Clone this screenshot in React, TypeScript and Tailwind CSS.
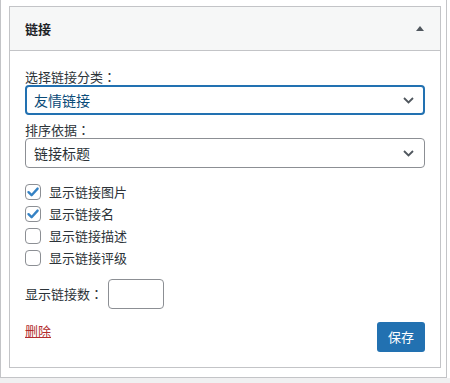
import React from "react";

const font = { fontFamily: '"Noto Sans CJK SC", "Noto Sans", sans-serif' };
const jp = { fontFamily: '"Noto Sans CJK JP", "Noto Sans CJK SC", sans-serif' };

function Colon() {
  return <span style={jp}>：</span>;
}

function Chevron() {
  return (
    <svg width="11" height="7" viewBox="0 0 11 7" className="shrink-0">
      <path d="M1 1 L5.5 5.5 L10 1" fill="none" stroke="#50575e" strokeWidth="1.8" />
    </svg>
  );
}

function Checkbox({ checked, label }: { checked: boolean; label: string }) {
  return (
    <div className="flex items-center h-4 gap-2">
      <div className="w-4 h-4 rounded-[4px] border border-[#8c8f94] bg-white flex items-center justify-center shrink-0">
        {checked && (
          <svg width="14" height="14" viewBox="0 0 14 14">
            <path d="M2.5 7.2 L5.6 10.2 L11.6 3.6" fill="none" stroke="#3582c4" strokeWidth="2.4" strokeLinecap="round" strokeLinejoin="round" />
          </svg>
        )}
      </div>
      <span className="text-[13px] leading-4 text-[#2c3338]">{label}</span>
    </div>
  );
}

export default function App() {
  return (
    <div className="w-[450px] h-[383px] bg-white flex flex-col" style={font}>
      <div className="w-[447px] h-[378px] bg-white border-l border-r border-b border-[#c3c4c7] pt-[6px] pl-[8px]">
        <div className="w-[432px] border border-[#c3c4c7] bg-white">
          <div className="h-[44px] bg-[#f6f7f7] border-b border-[#c3c4c7] flex items-center justify-between pl-[15px] pr-[16px]">
            <span className="text-[13px] font-semibold text-[#1d2327] leading-4">链接</span>
            <div className="w-0 h-0 border-l-[4px] border-r-[4px] border-b-[5px] border-l-transparent border-r-transparent border-b-[#50575e]" />
          </div>
          <div className="px-[15px] pt-[18px] pb-[15px] flex flex-col">
            <div className="text-[13px] leading-4 h-4 text-[#2c3338]">选择链接分类<Colon /></div>
            <div className="h-[30px] rounded-[4px] border-2 border-[#2271b1] flex items-center justify-between pl-[7px] pr-[9px]">
              <span className="text-[14px] leading-5 text-[#0a4b78]">友情链接</span>
              <Chevron />
            </div>
            <div className="mt-[7px] text-[13px] leading-4 h-4 text-[#2c3338]">排序依据<Colon /></div>
            <div className="h-[30px] rounded-[4px] border border-[#8c8f94] flex items-center justify-between pl-[8px] pr-[10px]">
              <span className="text-[14px] leading-5 text-[#2c3338]">链接标题</span>
              <Chevron />
            </div>
            <div className="mt-[16px] flex flex-col gap-[6px]">
              <Checkbox checked label="显示链接图片" />
              <Checkbox checked label="显示链接名" />
              <Checkbox checked={false} label="显示链接描述" />
              <Checkbox checked={false} label="显示链接评级" />
            </div>
            <div className="mt-[13px] flex items-center gap-[5px] h-[30px]">
              <span className="text-[13px] leading-4 text-[#2c3338]">显示链接数<Colon /></span>
              <div className="w-[56px] h-[30px] rounded-[4px] border border-[#8c8f94] bg-white" />
            </div>
            <div className="mt-[13px] flex items-start justify-between">
              <a className="text-[13px] leading-[18px] text-[#b32d2e] underline">删除</a>
              <button className="h-[30px] w-[48px] rounded-[3px] bg-[#2271b1] text-white text-[13px] leading-5 flex items-center justify-center">
                保存
              </button>
            </div>
          </div>
        </div>
      </div>
      <div className="w-[450px] h-[5px] bg-[#f0f0f1]" />
    </div>
  );
}
